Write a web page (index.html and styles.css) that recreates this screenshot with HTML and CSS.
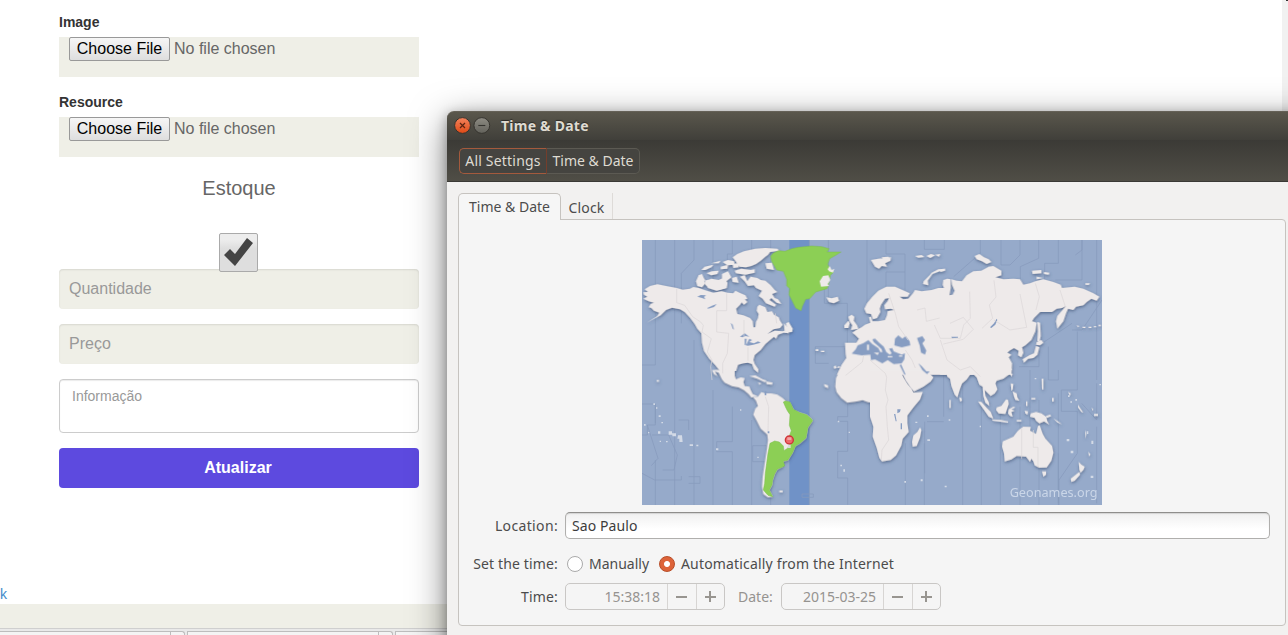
FILE: index.html
```
<!DOCTYPE html>
<html lang="pt-BR">
<head>
<meta charset="utf-8">
<title>Time &amp; Date</title>
<link rel="stylesheet" href="styles.css">
</head>
<body>
<div class="screen">
  <main class="page">
    <form class="product">
      <div class="label">Image</div>
      <div class="file"><span class="choose">Choose File</span><span class="none">No file chosen</span></div>
      <div class="label second">Resource</div>
      <div class="file"><span class="choose">Choose File</span><span class="none">No file chosen</span></div>
      <div class="stock">Estoque</div>
      <div class="check"><svg width="39" height="39" viewBox="0 0 39 39"><path d="M5 22l6-6 5 5L28 5l6 5-18 23z" fill="#444"/></svg></div>
      <div class="field">Quantidade</div>
      <div class="field">Preço</div>
      <div class="area">Informação</div>
      <div class="submit">Atualizar</div>
    </form>
    <a class="link">k</a>
    <div class="footer"></div>
    <div class="tasks"><i class="t1"></i><i class="t2"></i><i class="t3"></i></div>
  </main>
  <div class="scroll"><i></i></div>

  <section class="window">
    <header class="title">
      <svg width="40" height="20" viewBox="0 0 40 20">
        <defs>
          <linearGradient id="o" x2="0" y2="1"><stop stop-color="#f4835c"/><stop offset="1" stop-color="#df4a16"/></linearGradient>
          <linearGradient id="g" x2="0" y2="1"><stop stop-color="#8d8b83"/><stop offset="1" stop-color="#63625b"/></linearGradient>
        </defs>
        <circle cx="10.5" cy="9.5" r="7.9" fill="url(#o)" stroke="#35332e"/>
        <path d="M8 7l5 5m0-5l-5 5" stroke="#5c2411" stroke-width="1.2"/>
        <circle cx="29.8" cy="9.5" r="7.9" fill="url(#g)" stroke="#35332e"/>
        <path d="M26.3 9.5h7" stroke="#34332f" stroke-width="1.1"/>
      </svg>
      <b>Time &amp; Date</b>
    </header>
    <div class="toolbar"><span class="crumb all">All Settings</span><span class="crumb here">Time &amp; Date</span></div>
    <div class="content">
      <nav class="tabs"><span class="tab on">Time &amp; Date</span><span class="tab off">Clock</span></nav>
      <div class="panel">
        <svg class="map" width="460" height="265" viewBox="0 0 1380 795">
          <defs><filter id="sh" x="-5%" y="-5%" width="110%" height="110%"><feDropShadow dx="1" dy="4" stdDeviation="4" flood-color="#3d5274" flood-opacity=".75"/></filter></defs>
          <path d="M0 0h1380v795H0z" fill="#96aaca"/>
          <path d="M442 0h60v795h-60z" fill="#7092c7"/>
          <g fill="none" stroke="#8699bc" stroke-width="2.2">
            <path d="M40 0V375H0M98 0V795M156 0V60L118 100V250M156 300V795M213 0V140M213 450V795M271 0V42h-15V120M271 500V605H224v30h47V795M329 0V60M329 540V795M386 0V90M386 600V795M502 0V795M559 0V190h-12V80M559 190h57V320H520v50h40M617 320v210h-30v14h30v90h-30v80h30v80M675 0V210M732 0V42h57V96h-57V180M789 96V150M847 0V28h60V0M674 300V450M40 495V550M40 660V795"/>
            <path d="M848 545V700M905 400V530M790 610V795M847 610V795M905 545h-50M962 430V795M1018 440V795M1075 520V795M1134 500V795M1191 480V795M1249 390V420h-30v-100M1249 790V640M1164 390V560M1249 460V795M1306 390V450h-48v64h48V640l-55 80v75M1364 0V420M1364 430V540l-45-50M1364 790V560M1320 0V30l-20 15M1249 0V70h-41V125M1190 0V55l-55 25V160M1134 0V45l-30 30h-27V0M1015 0V40l-80 70M1191 300V380h-60M1306 275V390M1290 270h30l60-90M1320 0V120h-80M1200 310l90-60"/>
            <path d="M0 492h40V555H16v30H0M16 555L48 655l-20 22M30 585h50l26 60-10 45H62M0 700l38 20h80v-12M110 540h30v30M140 710h34v20h-34M332 617h42v48h-42zM480 762h34v10h-34z"/>
          </g>
          <g class="land" filter="url(#sh)">
            <g transform="translate(-6 -6)">
              <path d="M10 182l12-6-10-6-2-7 14-1-10-8 16-10 22-5 30 6 28 5 18 5 22-3 10-5 16 3 24 8 20 6 25-4 17 4 18 2 6-8 14 7 16 7 6 10-12 4-10 14-12 12 4 16 18 4 20 8 8 10 2 18h6l2-16 6-12 2-12-6-10 2-12 6-6 18 8 6 14 14-2 6 10 14 8 4 10 8 12-8 10-20 4-18 14 22-10 24 2 14-4-4-20 8-4 12 20-2 10-26 2-16 6-6 12-6-6-12 10-14 12-14 18-18 15-4 15 4 12 11 16-1 10-12-10-6-16-12-4-14 2-16 4-6 19h-48l-14-17-18-20-16-23-6-25-2-28-12-14-8-14-14-19-16-17-14-8-24-5-18 7-16 16-20 10-22 12 32-20 6-10-16-6-8-8-8-2 6-10 10-4-16-4z"/>
              <path d="M176 112l10-4 8 18-16 12-10-8zM196 132l18-10 22 4 18-8 8 18-4 14-22 6-14-4-16-4-10-8zM184 96l10-10 26-6-6 8-18 8zM200 106l16-6 20-2-4 10-18 4zM214 76l28-8-6 8zM242 86l22-6-2 12-20 2zM248 72l16-6 18 4 2 10-22 2zM246 108l18-8 10 18-18 14-10-8zM278 78l16-2 2 12-16 2zM284 98l20-6 28 4 12-2v10l-28 6-28-4zM276 120l14-4 6 18-18-2zM286 68l-8-10 14-10 20-8 34-8 30-2 36 2 6 6-28 4-6 8-10 8-12 10-14 10-14 6-16 4-20-2zM300 116l14-4 8 18 10-14 20 4 10 6 14 2 16 14 12 14 8 6-16 6 8 12 10 4 10 14-14-4-16-14-6 6 20 14-4 6-26-10-10-14-12-8 10-16-18-8-6-8-18 2-10-14zM304 182l10 2 8 8-10 8-8-8zM376 76l20-2 6 22-22-4z"/>
              <path d="M176 112l-2 10-6 8 4 14 14 4 10-12-2-12zM192 128l20-4 14 6 20-6 16 10-2 16-30 8-26-8z"/>
            </g>
            <g transform="translate(429 -6)">
              <path d="M182 348l-2-34 34 0 8-12-12-12-8-6 12-8 16-8 10-8 16-6-4-16 6-2 4 14h18l20-4 6-14 2-12 20-4-10-4-18 2-2-12 10-12 4-10-12 2-12 18-4 12 2 10-10 18-12 4-6-16-14-2-6-14 8-16 16-20 18-18 24-12 26 0 22 10 22 10-6 10-24 0 10 8 16-2 14-16 6-10 20 4 30-4 20-6 25 0V410H156l14-30 14-20z"/>
              <path d="M200 230l8 6-2 12 10 14 4 10-22 4 4-14-8-12-4-14zM178 262l12-14 4 8-4 14-12 0zM124 178l16 3 18-5 4 12-16 8-14-4zM258 66l22-4 38-4-2 10-16 8 6 10-16-2-8 8-12-6zM290 58l20-2 8 6-22 4zM390 54l20-3 8 6-18 2zM424 54l14-6 12 4-14 8zM450 50l16-2-4 8zM480 92l-20 2-20 10-6 8-18 18-2 8 16 4-2-14 14-20 22-8 16-2zM92 334h8v5h-8zM108 338h10v4h-10zM146 386l6-4 2 8-6 2zM154 388l10-4v6zM-3 256l12 14 2 16-12-2z"/>
            </g>
            <g transform="translate(894 -6)">
              <path d="M0 150l12 0-4-10 2-14 12-4 10 2 0 26-4 22 10-2 6-12-8-18-2-16 16 4 16 2 14-18 20-12 24-2 22-12 14-2 24 14 0 14-18 6 24 6 30-2 20 2 10 16 20-4 16-6 24-6 30 8 22 8 4 10 38-4 26 6 30 14 18 10-8 12-16-6-14 10-10 10-22 4-8 10-16-4-6 14-8 24-18 22-4-22 4-16 26-30-12 6-16 2-14 10-36 0-18 18-6 10 14 4-4 26-12 26-18 16-10 6 4 16-6 14-10-6 2-14-14-8-14 8-6 6 12 6-8 8 10 18-2 34H0z"/>
              <path d="M104 54l14-6 14 10 14 6 8 8-14 6-14-8-16-6zM0 96l14-4v6l-12 4zM276 98l28-2v10l-26 2zM312 102l16 2-2 6-14-2zM290 116l20 4-20 4zM436 136l14 0-4 5-10-1zM292 252l8 2 2 40-4 18-6-4 2-28zM290 312l14-6 6 8-10 8-12-2zM288 324l10 4-6 22-12 10-16 2-12 12-4-10 20-12 14-6zM410 262l8 2-4 4zM428 266h8v4h-8zM446 266h8v4h-8zM462 264h6v4h-6zM476 260h6v5h-6z"/>
            </g>
            <g transform="translate(-6 390)">
              <path d="M216 0l6 12 10 6-8-14 12 4 10 20 8 10 22 10 20 4 16 8 14 12 8 10 16-2 2-2-14-6-6-12-4-10-14-2-4-12 4-12-12-2-14 6-4-10V-2z"/>
              <path d="M328 18l18-2 22 12 12 4-6 4-22-10zM378 34l20 4-2 6-16-2zM354 38l10 2-6 4zM340 82l14-2 10-14 12 4h18l18 4 16 10 10 10 12 4 6 12 6 10 18 8 20 6 14 12 4 6-14 20-6 32-18 16-14 8-8 20-14 22-14 4-2 16-16 8-8 14-6 18-2 15-8 15 10 20-14 2-14-10-4-22 2-30 6-40 6-40 4-30-2-16-20-18-12-24-10-18 6-18 8-8-6-16zM600 0l-12 24-2 26 4 16 14 18 18 14 28-4 18-4 16 6 12 2v40V0zM418 362l10 0v5h-10zM552 42l12 4 0 8-10-4zM50 30h7v5h-7z"/>
            </g>
            <g transform="translate(684 390)">
              <path d="M0 0h90l10 22 12 20 12 14 6 12 28-2-8 22-20 24-18 24v24l4 26-18 20-4 20-16 30-16 14-26 4-8-10-8-30-12-34 2-30-10-30zM92 0l16 32 14 20 10 12 28-14 22-16 8-12L168 0zM170-4l10 8 48 2 4 14 8 6 4 22 10 26 8 8 8-26 6-16 14-12 10-14h12l8 8 8 22 10 6 2 28 6 20 12 10-2-12-10-18-2-18 8 8 10 10 12-8 8-12-6-18 4-8 20-6 16-12 10-18z"/>
              <path d="M150 172l4 8-4 22-10 26-12 2-2-14 4-20 12-10zM268 82l6 2 2 8-6 2zM324 94l10 2 16 18 12 12 8 20-14-6-14-20zM366 148l26 2 22 4v4l-46-6zM380 112l14-4 14-20 6 2 2 12-6 18-4 12-20-2-8-10zM416 118l14-8 6 2-12 6 10 4-10 4 4 14-8-2-6-8zM420 10l8 2-4 8zM422 40l8 2-2 16-4 4zM428 64l12 6 2 12 6 10-12-2-4-10zM440 150h14v4h-14zM464 122l10 2-2 10-6-4zM482 130l16-4 16 4 14 10 4 14 6 10-16-10-14 6-10-8-4-8-14-4zM528 138l12-4 4 4-14 6z"/>
              <path d="M398 214L430 200 442 184 448 178 460 170 482 171 480 182 498 192 504 168 509 166 518 192 526 206 546 228 550 248 544 272 530 292 508 293 494 286 490 274 484 266 480 276 468 260 440 258 424 268 404 274 402 250 396 230zM516 304h12l0 10-8 6zM626 276l8 8 10 6-4 10-8 8-4-8zM602 326l18-14 8-6 2 8-16 18-10 4z"/>
              <path d="M515 26h5v32h-4zM468 94h4v14h-4zM484 84h12v4h-12zM546 84h5v10h-5zM594 66l8 4-2 8zM624 104l6 10 10 14-6-2-10-14zM664 112l6 6-2 4zM672 132h12v6h-12zM645 180l4 12-2 14zM655 245l6 8-4 6zM550 145l12 8 14 10-14-6zM238 90h4v24h-4z"/>
            </g>
          </g>
          <g fill="#d3dae6">
            <path d="M80 574h10v6h12v9H91v-5H80zM108 586h12l2 20h-10v-10h-6zM48 574h7v7h-7zM34 490h5v5h-5zM42 502h4v4h-4zM50 526h6v5h-6zM58 546h5v4h-5zM6 552h5v5H6zM18 576h4v4h-4zM53 602h4v4h-4zM72 603h5v4h-5zM143 613h10v5h-10zM163 614h6v5h-6zM222 625h7v6h-7zM294 508h4v4h-4zM346 650h4v4h-4zM587 542h5v5h-5zM620 575h4v4h-4zM595 674h5v5h-5zM604 688h5v7h-5zM855 526h5v5h-5zM856 598h8v5h-8zM820 545h6v4h-6zM920 538h5v4h-5zM1013 557h4v5h-4zM787 723h5v5h-5zM836 718h6v6h-6zM908 737h6v5h-6zM1178 414h5v4h-5zM1278 466h5v5h-5zM1300 477h5v5h-5zM1285 484h5v4h-5zM1334 574h5v8h-5zM1348 602h6v10h-6zM1274 597h8v7h-8zM1286 632h8v8h-8zM1346 707h8v7h-8zM1372 432h5v4h-5z"/>
          </g>
          <g fill="#8ccf55" stroke="#7bbd4c" stroke-width="1.5">
            <path transform="translate(429 -6)" d="M-43 55L-36 46-20 38 0 40 20 32 40 28 80 24 110 26 132 32 126 42 168 42 152 52 134 62 128 78 132 88 146 102 136 112 130 142 126 152 92 162 74 182 62 184 52 205 48 218 32 210 22 190 12 170 14 152 5 143 5 124 -5 100 -25 96 -40 70z"/>
            <path transform="translate(-6 390)" d="M430 96l6-3 14 3 6 12 4 10 20 10 20 6 14 12 4 6-14 20-6 32-18 16-14 8-8 20-14 22-14 4 4 14-22 10-8 14-6 18-2 15-8 15 10 20-14-4-14-16 4-20 2-30 4-30 4-30 6-30 14-7 14 3 12 12 2 14 12-8 8-28-4-8 6-16-6-16 2-32-8-12-6-12z"/>
          </g>
          <g class="land" transform="translate(429 -6)"><path d="M114 114l16-2 6 14-8 12 4 6-24 2-4-16zM134 84l6 12 8-4-4 12-12-4-4-6z"/></g>
          <g fill="#879dc2">
            <path transform="translate(-6 -6)" d="M172 176l10-5 16 1-6 5 4 7-10-4zM202 210l14-7 14-5-8 9-18 5zM272 254l6 6 4 15-4-3zM300 296l14-10 14 10-12-2-8 4zM314 302l6 0-2 20 6-12 4-8 8 4-8 6 14 4 12-6 8 4-22 6-16 3-10-2z"/>
            <path transform="translate(429 -6)" d="M200 347l12-13 6-12 16-6 16-10 12 12 18 12 6 12 6 0-2-8-10-10-14-12-4-8 8-2 12 12 14 12 8 16 10 8 6-4-8-14 10-2 4 10 24 10 10-4-2 18-8 12-24 2-18-12-16 10-22-12-12 2-2-16-26 2zM330 302l10-10 12 10 10-8 12 16 2 12-26 6-22-6zM396 300l16-6 8 12-8 10 12 22-4 12-12-6-4-22zM344 382l4-4 14 32h-4zM400 376l10 8 14 16 10 0-8 8-14-12z"/>
            <path transform="translate(894 -6)" d="M150 268l12-12 8-14 2 4-6 14-12 10zM34 296l20 0v3l-18 2z"/>
            <path transform="translate(684 390)" d="M82 118l10 0-2 8-8 4zM72 132l4 0 4 22-3 0zM92 160h4v18h-4z"/>
            <path transform="translate(-6 390)" d="M374 64h5v12h-5zM383 184h5v6h-5z"/>
          </g>
          <path transform="translate(429 -6)" fill="#eeeaea" d="M246 320h6v16h-6zM266 344h16l-4 7zM308 354h14v4h-14zM342 352h10v4h-10z"/>
          <g fill="none" stroke="#dbd7d8" stroke-width="2">
            <path d="M104 146v42l24 8 24 34 24 16 8 10-4 20 28 20-12 40 14 24-4 20 4 40M254 160v52h-30v64l36 4-4 60-14 30v30M306 240v50M318 322v40M400 220l4 30"/>
            <path d="M740 160l20 60 10 40 28 40M825 210l24-6 4 40 40-10M877 255l18 40h60l10-40 20-20-2-80M924 250l40-18 30 36-30 30-60 14M1020 265l32-30-10-40 20-24-6-50M1056 240l48 30 50-8-20-100M1180 130l12 40-10 40M1254 150l16 50M665 346l-4 20-50 40M684 360l46 40 4 12-4 38 8 30-6 20 4 60 4 40-20 30-2 30M790 330l20 30 10 24M895 300l20 60 40 30 30-10 30 30"/>
            <path d="M1139 566v90M1174 570v52h14v60M370 470l10 30-2 74"/>
          </g>
          <circle cx="442" cy="600" r="12" fill="#ec6a6c" stroke="#cf3438" stroke-width="4"/><path d="M436 592h12v8h-12z" fill="#f4a5a5"/><path d="M438 614h8v10h-8z" fill="#d9dbdd"/>
          <text x="1103" y="771" class="credit">Geonames.org</text>
        </svg>
        <div class="row location"><label>Location:</label><div class="entry">Sao Paulo</div></div>
        <div class="row mode"><label>Set the time:</label><i class="radio"></i><span class="manual">Manually</span><i class="radio sel"></i><span class="auto">Automatically from the Internet</span></div>
        <div class="row when"><label>Time:</label>
          <div class="spin"><span>15:38:18</span><i></i><i class="plus"></i></div>
          <em>Date:</em>
          <div class="spin"><span>2015-03-25</span><i></i><i class="plus"></i></div>
        </div>
      </div>
    </div>
  </section>
</div>
</body>
</html>
```
FILE: styles.css
```
* { box-sizing: border-box; }
body { margin: 0; background: #fff; overflow: hidden; }
.screen { position: relative; width: 1288px; height: 635px; overflow: hidden; font-family: "Liberation Sans", Arial, sans-serif; }
.page { height: 635px; display: flex; flex-direction: column; }
.product { margin: 12px 0 0 59px; width: 360px; }
.label { font-size: 14px; line-height: 20px; font-weight: bold; color: #333; margin-bottom: 5px; }
.label.second { margin-top: 15px; }
.file { height: 40px; background: #efefe7; padding-left: 10px; display: flex; align-items: flex-start; gap: 4px; font-size: 16px; line-height: 22px; color: #666; }
.choose { width: 101px; height: 24px; border: 1px solid #999; border-radius: 2px; background: linear-gradient(#f6f6f6, #dedede); color: #000; text-align: center; }
.none { line-height: 24px; }
.stock { margin-top: 16px; height: 30px; line-height: 30px; font-size: 20px; color: #666; text-align: center; }
.check { position: relative; z-index: 1; width: 39px; height: 39px; margin: 30px 0 -3px 160px; border: 1px solid #aaa; border-radius: 2px; background: linear-gradient(#ededed 15%, #dedede 40%, #dedede); }
.check svg { display: block; margin: -1px; }
.field { height: 40px; margin-bottom: 15px; border-radius: 4px; background: #efefe7; box-shadow: inset 0 1px 2px rgba(0,0,0,.1); padding-left: 10px; font-size: 16px; line-height: 39px; color: #999; }
.area { height: 54px; border: 1px solid #ccc; border-radius: 4px; padding: 6px 12px; font-size: 14px; line-height: 20px; color: #999; box-shadow: inset 0 1px 1px rgba(0,0,0,.08); }
.submit { margin-top: 15px; height: 40px; border-radius: 4px; background: #5d4adf; color: #fff; font-size: 16px; font-weight: bold; line-height: 39px; text-align: center; padding-right: 2px; }
.link { margin-top: auto; height: 20px; line-height: 20px; font-size: 14px; color: #428bca; }
.footer { height: 24px; background: #efefe7; }
.tasks { height: 7px; background: #e9e9e9; border-top: 1px solid #cfcfcf; padding-top: 2px; display: flex; gap: 2px; }
.tasks i { height: 5px; border: 1px solid #bdbdbd; border-bottom: 0; border-radius: 0 3px 0 0; background: linear-gradient(90deg, #f4f4f4 calc(100% - 14px), #bdbdbd calc(100% - 14px), #bdbdbd calc(100% - 13px), #f4f4f4 calc(100% - 13px)); }
.t1 { width: 185px; border-left: 0 !important; }
.t2 { width: 206px; }
.t3 { width: 205px; }
.scroll { position: absolute; right: 0; top: 0; width: 6px; height: 635px; background: #f1f1f1; }
.scroll i { display: block; width: 2px; height: 1px; margin-left: 4px; background: #333; }

.window { position: absolute; left: 447px; top: 111px; width: 900px; height: 580px; border-radius: 7px 0 0 0; background: #f2f1f0; box-shadow: 0 10px 36px rgba(0,0,0,.5), 0 3px 12px rgba(0,0,0,.28); font-family: "Noto Sans", "Open Sans", sans-serif; font-size: 14px; color: #4c4c4c; }
.title { height: 29px; border-radius: 7px 0 0 0; border-top: 1px solid #656157; background: linear-gradient(#5a574c, #403f3a); display: flex; align-items: center; padding-left: 5px; gap: 9px; color: #dfdbd2; line-height: 28px; }
.title b { letter-spacing: .24px; text-shadow: 0 -1px 1px #2a2926; }
.toolbar { height: 42px; background: linear-gradient(#3b3a36, #504e46); border-bottom: 1px solid #3a3935; padding: 8px 0 0 13px; display: flex; color: #dfdbd2; }
.crumb { height: 26px; line-height: 24px; text-align: center; background: #454440; white-space: nowrap; }
.all { width: 88px; margin-left: -1px; border: 1px solid #a45a3d; border-right-color: #743e2c; border-radius: 5px 0 0 5px; letter-spacing: .2px; }
.here { width: 93px; border: 1px solid #5c5a53; border-left: 0; border-radius: 0 5px 5px 0; }
.content { padding: 11px 0 0 11px; }
.tabs { height: 27px; display: flex; margin-bottom: -1px; }
.tab { white-space: nowrap; text-align: center; }
.on { position: relative; width: 103px; height: 27px; line-height: 26px; border: 1px solid #c6c3bf; border-bottom: 0; border-radius: 5px 5px 0 0; background: #f6f6f6; }
.off { width: 52px; height: 26px; line-height: 29px; border-right: 1px solid #dedbd8; letter-spacing: .2px; }
.panel { width: 828px; height: 407px; border: 1px solid #c6c3bf; border-radius: 0 4px 4px 4px; background: #f5f5f5; padding: 20px 0 0; }
.map { display: block; margin-left: 183px; }
.land { fill: #eeeaea; }
.credit { font-family: "Noto Sans", sans-serif; font-size: 38px; fill: #cad6e8; }
.row { display: flex; align-items: center; height: 27px; }
.row label { width: 99px; text-align: right; letter-spacing: .15px; white-space: nowrap; }
.location { margin-top: 7px; }
.row.location label { letter-spacing: .35px; }
.entry { width: 705px; height: 27px; margin-left: 7px; border: 1px solid #b0afad; border-top-color: #8f8e8c; border-radius: 5px; background: linear-gradient(#f0f0f0, #fff 65%); box-shadow: inset 0 1px 1px rgba(0,0,0,.12); color: #3c3c3c; line-height: 25px; padding-left: 6px; letter-spacing: .1px; }
.mode { margin-top: 11px; }
.radio { width: 16px; height: 16px; border: 1px solid #aaa; border-radius: 50%; background: #fff; margin-left: 9px; flex: none; }
.manual { margin-left: 6px; width: 61px; }
.sel { border-color: #b84d27; background: radial-gradient(circle, #fff 0 2.5px, #dd6339 3.5px); }
.auto { margin-left: 6px; letter-spacing: .17px; }
.when { margin-top: 6px; }
.spin { width: 160px; height: 27px; margin-left: 7px; border: 1px solid #c9c7c5; border-radius: 5px; display: flex; color: #959390; line-height: 25px; }
.spin span { flex: 1; text-align: right; padding-right: 7px; }
.spin i { width: 29px; border-left: 1px solid #d7d5d3; background: linear-gradient(#989590, #989590) 8px 12px / 11px 2px no-repeat; }
.spin i:not(.plus) { width: 29px; }
.spin .plus { width: 28px; background: linear-gradient(#989590, #989590) 8px 12px / 11px 2px no-repeat, linear-gradient(#989590, #989590) 12px 7px / 2px 11px no-repeat; }
.when em { font-style: normal; color: #959390; width: 36px; margin-left: 13px; }
.when em + .spin { margin-left: 7px; }
```
